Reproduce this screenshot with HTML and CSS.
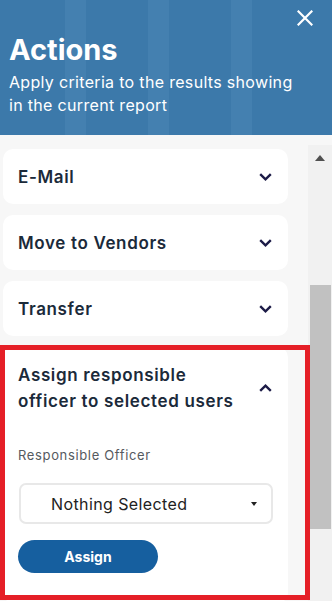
FILE: index.html
```html
<!DOCTYPE html>
<html>
<head>
<meta charset="utf-8">
<link rel="stylesheet" href="styles.css">
</head>
<body>
<div class="panel">
  <header class="head">
    <div class="stripes"><span></span><span></span><span></span></div>
    <button class="close" aria-label="Close">
      <svg width="16" height="16" viewBox="0 0 16 16"><path d="M1.5 1.5 L14.5 14.5 M14.5 1.5 L1.5 14.5" stroke="#fff" stroke-width="2.2" stroke-linecap="square" fill="none"/></svg>
    </button>
    <h1 class="title">Actions</h1>
    <p class="subtitle">Apply criteria to the results showing<br>in the current report</p>
  </header>
  <div class="body">
    <div class="list">
      <div class="card">
        <span class="card-title">E-Mail</span>
        <svg class="chev" width="13" height="8" viewBox="0 0 13 8"><path d="M1.2 1.2 L6.5 6.3 L11.8 1.2" stroke="#1c1b47" stroke-width="2.4" fill="none"/></svg>
      </div>
      <div class="card">
        <span class="card-title">Move to Vendors</span>
        <svg class="chev" width="13" height="8" viewBox="0 0 13 8"><path d="M1.2 1.2 L6.5 6.3 L11.8 1.2" stroke="#1c1b47" stroke-width="2.4" fill="none"/></svg>
      </div>
      <div class="card">
        <span class="card-title">Transfer</span>
        <svg class="chev" width="13" height="8" viewBox="0 0 13 8"><path d="M1.2 1.2 L6.5 6.3 L11.8 1.2" stroke="#1c1b47" stroke-width="2.4" fill="none"/></svg>
      </div>
      <div class="card open">
        <div class="card-head">
          <span class="card-title">Assign responsible<br>officer to selected users</span>
          <svg class="chev" width="13" height="8" viewBox="0 0 13 8"><path d="M1.2 6.8 L6.5 1.7 L11.8 6.8" stroke="#1c1b47" stroke-width="2.4" fill="none"/></svg>
        </div>
        <div class="field-label">Responsible Officer</div>
        <div class="select">
          <span>Nothing Selected</span>
          <span class="caret"></span>
        </div>
        <button class="assign">Assign</button>
      </div>
      <div class="highlight"></div>
    </div>
    <div class="scrollbar">
      <div class="sb-arrow"></div>
      <div class="sb-thumb"></div>
    </div>
  </div>
</div>
</body>
</html>
```

FILE: styles.css
```css
* { box-sizing: border-box; }
html, body { margin: 0; padding: 0; }
body {
  width: 332px;
  height: 601px;
  overflow: hidden;
  font-family: "Inter", "Noto Sans", "Liberation Sans", sans-serif;
  background: #f7f7f7;
}
.panel { width: 332px; height: 601px; display: flex; flex-direction: column; }
.head {
  position: relative;
  height: 135px;
  background: #3c79aa;
  color: #fff;
  padding: 32px 9px 0 9px;
  overflow: hidden;
}
.stripes {
  position: absolute;
  inset: 0;
  display: flex;
  gap: 62px;
  padding-left: 65px;
}
.stripes span { width: 21px; height: 100%; background: #4480b0; }
.close {
  position: absolute;
  top: 10px;
  right: 19px;
  width: 16px;
  height: 16px;
  padding: 0;
  border: 0;
  background: transparent;
  display: block;
}
.close svg { display: block; }
.title {
  position: relative;
  margin: 0;
  font-size: 29px;
  line-height: 36px;
  font-weight: 700;
  letter-spacing: 0;
}
.subtitle {
  position: relative;
  margin: 3px 0 0 0;
  font-size: 16px;
  line-height: 23px;
  font-weight: 400;
  letter-spacing: 0.32px;
}
.body { flex: 1; display: flex; min-height: 0; }
.list {
  position: relative;
  width: 308px;
  padding: 14px 20px 0 3px;
  display: flex;
  flex-direction: column;
  gap: 11px;
}
.card {
  background: #fff;
  border-radius: 10px;
  height: 55px;
  display: flex;
  align-items: center;
  justify-content: space-between;
  padding: 0 16px 0 15px;
  flex-shrink: 0;
}
.card-title {
  color: #1b2a3a;
  font-size: 17px;
  font-weight: 600;
  line-height: 26px;
  letter-spacing: 0.65px;
}
.chev { display: block; }
.card.open {
  height: auto;
  display: block;
  padding: 15px 16px 30px 15px;
}
.card-head { display: flex; align-items: center; justify-content: space-between; }
.field-label {
  margin-top: 32px;
  font-size: 13px;
  line-height: 18px;
  color: #555a60;
  letter-spacing: 0.65px;
}
.select {
  margin: 19px 0 0 1px;
  width: 254px;
  height: 41px;
  border: 2px solid #e8e8e8;
  border-radius: 7px;
  display: flex;
  align-items: center;
  justify-content: space-between;
  padding: 0 14px 0 30px;
  font-size: 16px;
  color: #222;
  letter-spacing: 0.4px;
}
.caret {
  width: 0;
  height: 0;
  border-left: 3.5px solid transparent;
  border-right: 3.5px solid transparent;
  border-top: 4px solid #222;
}
.assign {
  display: block;
  margin-top: 16px;
  width: 140px;
  height: 33px;
  border: 0;
  border-radius: 17px;
  background: #165f9f;
  color: #fff;
  font-family: inherit;
  font-size: 14px;
  font-weight: 700;
}
.highlight {
  position: absolute;
  left: 0;
  top: 210px;
  width: 310px;
  height: 255px;
  border: 5px solid #e51f27;
  z-index: 2;
}
.scrollbar {
  width: 24px;
  margin-top: 10px;
  background: #f1f1f1;
  position: relative;
  display: flex;
  flex-direction: column;
  align-items: flex-end;
}
.sb-arrow {
  align-self: center;
  margin-top: 10px;
  width: 0;
  height: 0;
  border-left: 5.5px solid transparent;
  border-right: 5.5px solid transparent;
  border-bottom: 6px solid #505050;
}
.sb-thumb {
  margin-top: 124px;
  margin-right: 1px;
  width: 21px;
  height: 244px;
  background: #c1c1c1;
}
```
